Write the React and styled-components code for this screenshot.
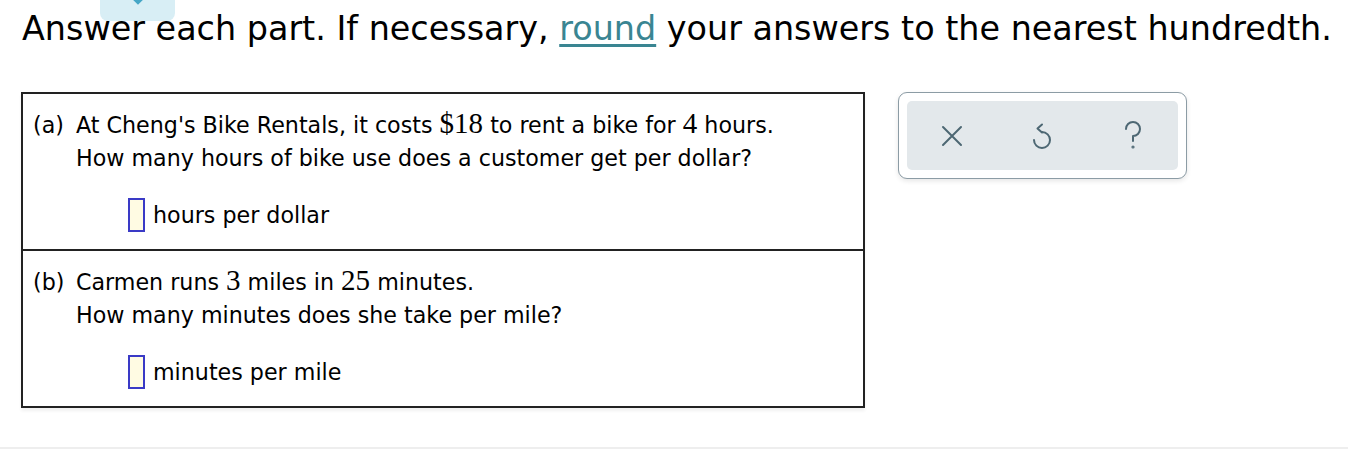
import styled, { createGlobalStyle } from "styled-components";

const GlobalStyle = createGlobalStyle`
  html, body {
    margin: 0;
    padding: 0;
    background: #ffffff;
    font-family: "DejaVu Sans", Verdana, sans-serif;
    color: #000;
  }
`;

const Page = styled.div`
  position: relative;
  width: 1348px;
  height: 449px;
  box-sizing: border-box;
  border-bottom: 2px solid #eeeeee;
  overflow: hidden;
`;

const Tab = styled.div`
  position: absolute;
  left: 100px;
  top: -10px;
  width: 75px;
  height: 31px;
  border-radius: 8px;
  background: #d8eef5;
  display: flex;
  justify-content: center;
  align-items: flex-start;
  padding-top: 5px;
  box-sizing: border-box;
`;

const Header = styled.h1`
  margin: 0;
  padding: 8px 0 0 22px;
  font-size: 33.4px;
  font-weight: normal;
  line-height: 42px;
  white-space: nowrap;
`;

const Link = styled.a`
  color: #3a8592;
  text-decoration: underline;
  text-underline-offset: 4px;
`;

const Body = styled.div`
  display: flex;
  align-items: flex-start;
  gap: 33px;
  padding: 42px 0 0 21px;
`;

const Questions = styled.div`
  width: 844px;
  border: 2px solid #222;
  box-sizing: border-box;
  box-shadow: 0 3px 3px rgba(0, 0, 0, 0.06);
`;

const Part = styled.div`
  padding: 15px 0 17px 10px;
  font-size: 22.2px;
  border-top: ${(p) => (p.$first ? "none" : "2px solid #222")};
`;

const Line = styled.div`
  display: flex;
  align-items: baseline;
  height: 33px;
  line-height: 33px;
  white-space: nowrap;
`;

const Label = styled.span`
  width: 43px;
  flex-shrink: 0;
`;

const Num = styled.span`
  font-family: "Liberation Serif", "Times New Roman", serif;
  font-size: 29px;
  line-height: 1;
`;

const AnswerRow = styled.div`
  display: flex;
  align-items: center;
  gap: 8px;
  height: 34px;
  margin: 23px 0 0 95px;
`;

const InputBox = styled.span`
  display: inline-block;
  width: 13px;
  height: 30px;
  border: 2px solid #3a3ac6;
  background: #fffbe3;
`;

const ToolPanel = styled.div`
  width: 289px;
  height: 87px;
  box-sizing: border-box;
  border: 1.5px solid #8c9ca5;
  border-radius: 9px;
  padding: 8px;
  background: #fff;
  box-shadow: 0 2px 5px rgba(0, 0, 0, 0.1);
`;

const ToolInner = styled.div`
  height: 100%;
  background: #e3e8eb;
  border-radius: 5px;
  display: grid;
  grid-template-columns: repeat(3, 1fr);
  align-items: center;
  justify-items: center;
`;

const IconBtn = styled.span`
  display: flex;
  color: #4d6773;
`;

const stroke = {
  fill: "none",
  stroke: "currentColor",
  strokeWidth: 2,
  strokeLinecap: "round",
  strokeLinejoin: "round",
};

const CloseIcon = () => (
  <svg width="22" height="22" viewBox="0 0 22 22" style={stroke}>
    <path d="M2 2 L20 20 M20 2 L2 20" />
  </svg>
);

const UndoIcon = () => (
  <svg width="22" height="28" viewBox="0 0 22 28" style={stroke}>
    <path d="M11 2.5 L6.5 6.5 L11 10.5" />
    <path d="M11 10 A8 8 0 1 1 3 18" />
  </svg>
);

const HelpIcon = () => (
  <svg width="20" height="30" viewBox="0 0 20 30" style={stroke}>
    <path d="M3 8 A7 7 0 1 1 10 15 L10 20" />
    <circle cx="10" cy="26" r="0.6" />
  </svg>
);

export default function App() {
  return (
    <>
      <GlobalStyle />
      <Page>
        <Tab>
          <svg width="16" height="10" viewBox="0 0 16 10">
            <path d="M2 1 L8 7 L14 1" fill="none" stroke="#45a6c6" strokeWidth="4" />
          </svg>
        </Tab>
        <Header>
          Answer each part. If necessary, <Link>round</Link> your answers to the nearest hundredth.
        </Header>
        <Body>
          <Questions>
            <Part $first>
              <Line>
                <Label>(a)</Label>
                <span>
                  At Cheng's Bike Rentals, it costs <Num>$18</Num> to rent a bike for <Num>4</Num> hours.
                </span>
              </Line>
              <Line>
                <Label />
                <span>How many hours of bike use does a customer get per dollar?</span>
              </Line>
              <AnswerRow>
                <InputBox />
                <span>hours per dollar</span>
              </AnswerRow>
            </Part>
            <Part>
              <Line>
                <Label>(b)</Label>
                <span>
                  Carmen runs <Num>3</Num> miles in <Num>25</Num> minutes.
                </span>
              </Line>
              <Line>
                <Label />
                <span>How many minutes does she take per mile?</span>
              </Line>
              <AnswerRow>
                <InputBox />
                <span>minutes per mile</span>
              </AnswerRow>
            </Part>
          </Questions>
          <ToolPanel>
            <ToolInner>
              <IconBtn>
                <CloseIcon />
              </IconBtn>
              <IconBtn>
                <UndoIcon />
              </IconBtn>
              <IconBtn>
                <HelpIcon />
              </IconBtn>
            </ToolInner>
          </ToolPanel>
        </Body>
      </Page>
    </>
  );
}
